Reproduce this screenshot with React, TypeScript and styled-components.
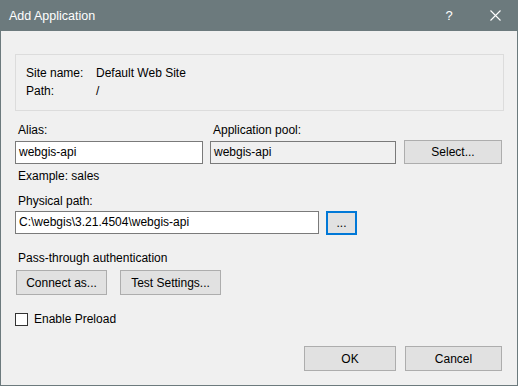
import React from "react";
import styled, { createGlobalStyle } from "styled-components";

const Global = createGlobalStyle`
  html, body { margin: 0; padding: 0; background: #f0f0f0; }
  body { font-family: "Segoe UI", "Liberation Sans", Arial, sans-serif; font-size: 12px; color: #000; }
  * { box-sizing: border-box; }
`;

const Window = styled.div`
  width: 518px;
  height: 386px;
  display: flex;
  flex-direction: column;
  background: #f0f0f0;
  border: 1px solid #6c7a7d;
  border-top: none;
`;

const TitleBar = styled.div`
  height: 31px;
  margin: 0 -1px;
  background: #6c7a7d;
  color: #ffffff;
  display: flex;
  align-items: center;
  padding-left: 9px;
  font-size: 12.5px;
`;

const Title = styled.div`
  flex: 1;
`;

const TitleButton = styled.div<{ $w: number }>`
  width: ${(p) => p.$w}px;
  height: 31px;
  display: flex;
  align-items: center;
  justify-content: center;
  color: #ffffff;
  font-size: 13px;
`;

const Body = styled.div`
  display: flex;
  flex-direction: column;
  padding: 0 14px 14px 14px;
  flex: 1;
`;

const GroupBox = styled.div`
  margin-top: 23px;
  width: 489px;
  height: 57px;
  border: 1px solid #dcdcdc;
  padding: 9px 0 0 10px;
  display: grid;
  grid-template-columns: 70px 1fr;
  grid-auto-rows: 18px;
  align-items: center;
`;

const Text = styled.div<{ $pl?: number }>`
  line-height: 18px;
  height: 18px;
  padding-left: ${(p) => p.$pl ?? 0}px;
  white-space: nowrap;
`;

const Row = styled.div<{ $mt?: number; $ml?: number; $gap?: number; $align?: string }>`
  display: flex;
  align-items: ${(p) => p.$align ?? "flex-start"};
  gap: ${(p) => p.$gap ?? 8}px;
  margin-top: ${(p) => p.$mt ?? 0}px;
  margin-left: ${(p) => p.$ml ?? 0}px;
`;

const Col = styled.div<{ $w: number; $ml?: number }>`
  width: ${(p) => p.$w}px;
  margin-left: ${(p) => p.$ml ?? 0}px;
  display: flex;
  flex-direction: column;
`;

const Input = styled.div<{ $w?: number; $readOnly?: boolean }>`
  width: ${(p) => (p.$w ? `${p.$w}px` : "100%")};
  height: 23px;
  border: 1px solid #7a7a7a;
  background: ${(p) => (p.$readOnly ? "#f0f0f0" : "#ffffff")};
  padding-left: 3px;
  line-height: 21px;
  white-space: nowrap;
  overflow: hidden;
`;

const Button = styled.div<{ $w: number; $h?: number; $focused?: boolean }>`
  width: ${(p) => p.$w}px;
  height: ${(p) => p.$h ?? 25}px;
  border: ${(p) => (p.$focused ? "2px solid #0078d7" : "1px solid #adadad")};
  background: #e1e1e1;
  display: flex;
  align-items: center;
  justify-content: center;
  white-space: nowrap;
`;

const CheckRow = styled.div`
  display: flex;
  align-items: center;
  gap: 6px;
  margin-top: 15px;
  height: 18px;
`;

const CheckBox = styled.div`
  width: 13px;
  height: 13px;
  border: 1px solid #333333;
  background: #ffffff;
`;

const Footer = styled.div`
  margin-top: auto;
  display: flex;
  justify-content: flex-end;
  gap: 9px;
  padding-right: 1px;
`;

export default function App() {
  return (
    <>
      <Global />
      <Window>
        <TitleBar>
          <Title>Add Application</Title>
          <TitleButton $w={46}>?</TitleButton>
          <TitleButton $w={46}>
            <svg width="11" height="11" viewBox="0 0 11 11">
              <path d="M0.5 0.5 L10.5 10.5 M10.5 0.5 L0.5 10.5" stroke="#ffffff" strokeWidth="1.1" />
            </svg>
          </TitleButton>
        </TitleBar>
        <Body>
          <GroupBox>
            <Text>Site name:</Text>
            <Text>Default Web Site</Text>
            <Text>Path:</Text>
            <Text>/</Text>
          </GroupBox>

          <Row $mt={10} $gap={0} $align="flex-end">
            <Col $w={188}>
              <Text $pl={3}>Alias:</Text>
              <Row $mt={2}>
                <Input>webgis-api</Input>
              </Row>
            </Col>
            <Col $w={186} $ml={7}>
              <Text $pl={3}>Application pool:</Text>
              <Row $mt={2}>
                <Input $readOnly>webgis-api</Input>
              </Row>
            </Col>
            <Col $w={98} $ml={8}>
              <Button $w={98} $h={24}>Select...</Button>
            </Col>
          </Row>

          <Row $mt={3}>
            <Text $pl={3}>Example: sales</Text>
          </Row>
          <Row $mt={7}>
            <Text $pl={3}>Physical path:</Text>
          </Row>
          <Row $mt={1} $gap={7}>
            <Input $w={304}>C:\webgis\3.21.4504\webgis-api</Input>
            <Button $w={31} $h={24} $focused>...</Button>
          </Row>

          <Row $mt={14}>
            <Text $pl={3}>Pass-through authentication</Text>
          </Row>
          <Row $mt={3} $ml={1} $gap={13}>
            <Button $w={91}>Connect as...</Button>
            <Button $w={101}>Test Settings...</Button>
          </Row>

          <CheckRow>
            <CheckBox />
            <Text>Enable Preload</Text>
          </CheckRow>

          <Footer>
            <Button $w={92}>OK</Button>
            <Button $w={97}>Cancel</Button>
          </Footer>
        </Body>
      </Window>
    </>
  );
}
